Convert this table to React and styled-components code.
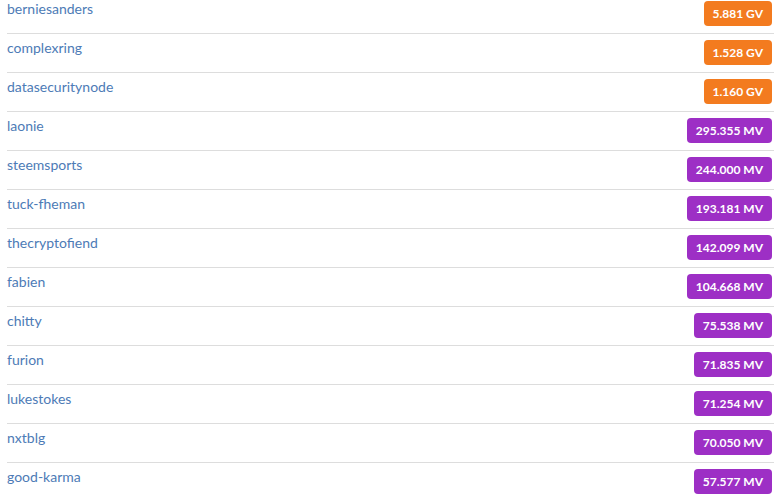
import React from 'react';
import styled, { createGlobalStyle } from 'styled-components';

const GlobalStyle = createGlobalStyle`
    body {
        margin: 0;
        background: #fff;
        font-family: Lato, "Open Sans", sans-serif;
        overflow: hidden;
    }
`;

const witnesses = [
    { name: 'berniesanders', value: '5.881 GV', unit: 'gv' },
    { name: 'complexring', value: '1.528 GV', unit: 'gv' },
    { name: 'datasecuritynode', value: '1.160 GV', unit: 'gv' },
    { name: 'laonie', value: '295.355 MV', unit: 'mv' },
    { name: 'steemsports', value: '244.000 MV', unit: 'mv' },
    { name: 'tuck-fheman', value: '193.181 MV', unit: 'mv' },
    { name: 'thecryptofiend', value: '142.099 MV', unit: 'mv' },
    { name: 'fabien', value: '104.668 MV', unit: 'mv' },
    { name: 'chitty', value: '75.538 MV', unit: 'mv' },
    { name: 'furion', value: '71.835 MV', unit: 'mv' },
    { name: 'lukestokes', value: '71.254 MV', unit: 'mv' },
    { name: 'nxtblg', value: '70.050 MV', unit: 'mv' },
    { name: 'good-karma', value: '57.577 MV', unit: 'mv' },
];

const List = styled.div`
    margin-top: -5px;
    padding-left: 7px;
`;

const Row = styled.div`
    display: flex;
    justify-content: space-between;
    align-items: flex-start;
    height: 38px;
    border-bottom: 1px solid #dddddd;
    &:last-child {
        border-bottom: none;
    }
`;

const Name = styled.a`
    font-size: 14px;
    line-height: 20px;
    padding-top: 4px;
    color: #4d7bb6;
    text-decoration: none;
`;

const Badge = styled.span`
    margin-top: 6px;
    margin-right: 2px;
    height: 25px;
    line-height: 25px;
    padding: 0 9px;
    border-radius: 4px;
    font-size: 12px;
    font-weight: 700;
    color: #fff;
    background: ${({ unit }) => (unit === 'gv' ? '#f37b1f' : '#9d2fc5')};
`;

const App = () => {
    return (
        <>
            <GlobalStyle />
            <List>
                {witnesses.map((item) => (
                    <Row key={item.name}>
                        <Name href="#">{item.name}</Name>
                        <Badge unit={item.unit}>{item.value}</Badge>
                    </Row>
                ))}
            </List>
        </>
    );
};

export default App;
